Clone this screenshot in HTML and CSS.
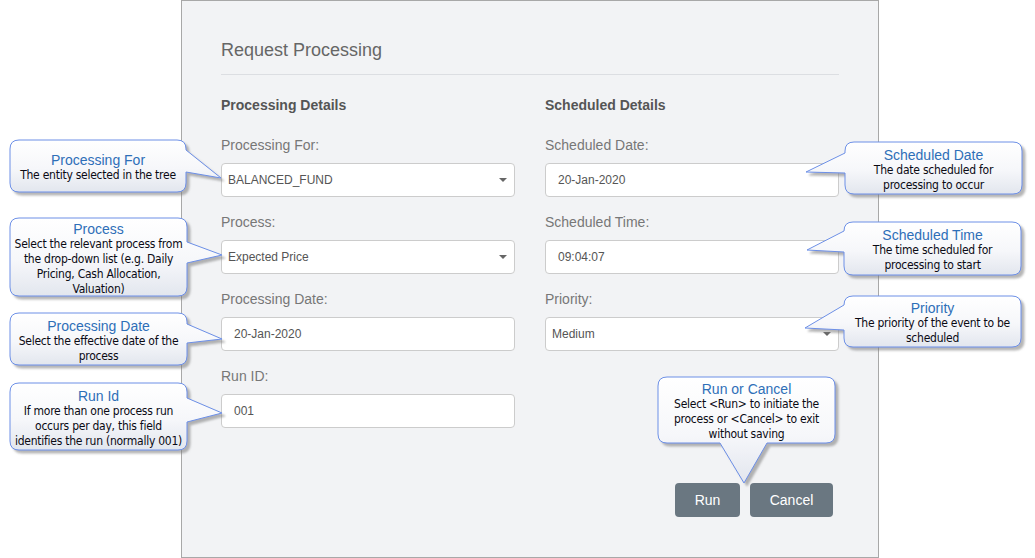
FILE: index.html
```html
<!DOCTYPE html>
<html>
<head>
<meta charset="utf-8">
<link rel="stylesheet" href="styles.css">
</head>
<body>
<div class="stage">
  <svg class="defs" width="0" height="0" aria-hidden="true">
    <defs>
      <linearGradient id="cg" x1="0" y1="0" x2="0" y2="1">
        <stop offset="0" stop-color="#ffffff"/>
        <stop offset="0.55" stop-color="#f6f7fa"/>
        <stop offset="1" stop-color="#e2e6ee"/>
      </linearGradient>
      <filter id="cs" x="-20%" y="-20%" width="150%" height="160%">
        <feDropShadow dx="3" dy="3" stdDeviation="1.2" flood-color="#7a7a7a" flood-opacity="0.55"/>
      </filter>
    </defs>
  </svg>

  <section class="panel">
    <h1 class="title">Request Processing</h1>
    <div class="cols">
      <div class="col">
        <h2 class="sect">Processing Details</h2>
        <div class="field">
          <label class="lbl">Processing For:</label>
          <div class="input select"><span>BALANCED_FUND</span><span class="caret"></span></div>
        </div>
        <div class="field">
          <label class="lbl">Process:</label>
          <div class="input select"><span>Expected Price</span><span class="caret"></span></div>
        </div>
        <div class="field">
          <label class="lbl">Processing Date:</label>
          <div class="input">20-Jan-2020</div>
        </div>
        <div class="field">
          <label class="lbl">Run ID:</label>
          <div class="input">001</div>
        </div>
      </div>
      <div class="col">
        <h2 class="sect">Scheduled Details</h2>
        <div class="field">
          <label class="lbl">Scheduled Date:</label>
          <div class="input">20-Jan-2020</div>
        </div>
        <div class="field">
          <label class="lbl">Scheduled Time:</label>
          <div class="input">09:04:07</div>
        </div>
        <div class="field">
          <label class="lbl">Priority:</label>
          <div class="input select"><span>Medium</span><span class="caret"></span></div>
        </div>
      </div>
    </div>
    <div class="actions">
      <button class="btn btn-run">Run</button>
      <button class="btn btn-cancel">Cancel</button>
    </div>
  </section>

  <div class="callout c-for">
    <svg width="176" height="52"><path d="M9,0 H167 Q176,0 176,9 V10 L211,38 L176,32 V43 Q176,52 167,52 H9 Q0,52 0,43 V9 Q0,0 9,0 Z"/></svg>
    <div class="txt"><div class="ct">Processing For</div><div class="cb">The entity selected in the tree</div></div>
  </div>

  <div class="callout c-process">
    <svg width="177" height="78"><path d="M9,0 H168 Q177,0 177,9 V24 L212,37 L177,45 V69 Q177,78 168,78 H9 Q0,78 0,69 V9 Q0,0 9,0 Z"/></svg>
    <div class="txt"><div class="ct">Process</div><div class="cb">Select the relevant process from<br>the drop-down list (e.g. Daily<br>Pricing, Cash Allocation,<br>Valuation)</div></div>
  </div>

  <div class="callout c-pdate">
    <svg width="177" height="52"><path d="M9,0 H168 Q177,0 177,9 V11 L212,26 L177,30 V43 Q177,52 168,52 H9 Q0,52 0,43 V9 Q0,0 9,0 Z"/></svg>
    <div class="txt"><div class="ct">Processing Date</div><div class="cb">Select the effective date of the<br>process</div></div>
  </div>

  <div class="callout c-runid">
    <svg width="177" height="67"><path d="M9,0 H168 Q177,0 177,9 V15 L212,30 L177,39 V58 Q177,67 168,67 H9 Q0,67 0,58 V9 Q0,0 9,0 Z"/></svg>
    <div class="txt"><div class="ct">Run Id</div><div class="cb">If more than one process run<br>occurs per day, this field<br>identifies the run (normally 001)</div></div>
  </div>

  <div class="callout c-sdate">
    <svg width="177" height="52"><path d="M9,0 H168 Q177,0 177,9 V43 Q177,52 168,52 H9 Q0,52 0,43 V31 L-39,30 L0,11 V9 Q0,0 9,0 Z"/></svg>
    <div class="txt"><div class="ct">Scheduled Date</div><div class="cb">The date scheduled for<br>processing to occur</div></div>
  </div>

  <div class="callout c-stime">
    <svg width="177" height="53"><path d="M9,0 H168 Q177,0 177,9 V44 Q177,53 168,53 H9 Q0,53 0,44 V30 L-37,28 L0,9 Q0,0 9,0 Z"/></svg>
    <div class="txt"><div class="ct">Scheduled Time</div><div class="cb">The time scheduled for<br>processing to start</div></div>
  </div>

  <div class="callout c-priority">
    <svg width="177" height="51"><path d="M9,0 H168 Q177,0 177,9 V42 Q177,51 168,51 H9 Q0,51 0,42 V34 L-39,32 L0,9 Q0,0 9,0 Z"/></svg>
    <div class="txt"><div class="ct">Priority</div><div class="cb">The priority of the event to be<br>scheduled</div></div>
  </div>

  <div class="callout c-run">
    <svg width="177" height="66"><path d="M9,0 H168 Q177,0 177,9 V57 Q177,66 168,66 H109 L86,106 L62,66 H9 Q0,66 0,57 V9 Q0,0 9,0 Z"/></svg>
    <div class="txt"><div class="ct">Run or Cancel</div><div class="cb">Select &lt;Run&gt; to initiate the<br>process or &lt;Cancel&gt; to exit<br>without saving</div></div>
  </div>
</div>
</body>
</html>
```

FILE: styles.css
```css
html, body {
  margin: 0;
  padding: 0;
  background: #ffffff;
}

.stage {
  position: relative;
  width: 1035px;
  height: 558px;
  overflow: hidden;
  font-family: "Liberation Sans", Arial, sans-serif;
}

.defs {
  position: absolute;
  width: 0;
  height: 0;
}

.panel {
  margin-left: 181px;
  width: 698px;
  height: 558px;
  box-sizing: border-box;
  border: 1px solid #a8a8a8;
  background: #f2f3f5;
  padding: 37px 39px 0 39px;
}

.title {
  margin: 0;
  font-size: 18px;
  font-weight: normal;
  line-height: 24px;
  color: #666666;
  padding-bottom: 12px;
  border-bottom: 1px solid #dcdee2;
}

.cols {
  display: grid;
  grid-template-columns: 294px 294px;
  column-gap: 30px;
  margin-top: 20px;
}

.sect {
  margin: 0 0 20px 0;
  font-size: 14px;
  font-weight: bold;
  line-height: 20px;
  color: #555555;
}

.field {
  margin-bottom: 15px;
}

.field:last-child {
  margin-bottom: 0;
}

.lbl {
  display: block;
  font-size: 14px;
  line-height: 20px;
  color: #777777;
  margin-bottom: 8px;
}

.input {
  height: 34px;
  box-sizing: border-box;
  border: 1px solid #cccccc;
  border-radius: 4px;
  background: #ffffff;
  display: flex;
  align-items: center;
  padding: 0 12px;
  font-size: 12px;
  color: #555555;
}

.select {
  justify-content: space-between;
  padding: 0 7px 0 6px;
}

.caret {
  width: 0;
  height: 0;
  border-left: 4px solid transparent;
  border-right: 4px solid transparent;
  border-top: 4px solid #666666;
}

.actions {
  display: flex;
  justify-content: flex-end;
  gap: 10px;
  margin-top: 55px;
  padding-right: 6px;
}

.btn {
  height: 34px;
  border: none;
  border-radius: 4px;
  background: #6a7781;
  color: #ffffff;
  font-family: "Liberation Sans", Arial, sans-serif;
  font-size: 14px;
  padding: 0;
}

.btn-run { width: 65px; }
.btn-cancel { width: 83px; }

/* callouts */
.callout {
  position: absolute;
}

.callout svg {
  position: absolute;
  left: 0;
  top: 0;
  overflow: visible;
}

.callout path {
  fill: url(#cg);
  stroke: #6c8fe6;
  stroke-width: 1;
  filter: url(#cs);
}

.txt {
  position: relative;
  height: 100%;
  box-sizing: border-box;
  padding-top: 4px;
  display: flex;
  flex-direction: column;
  justify-content: center;
  align-items: center;
  text-align: center;
}

.ct {
  font-family: "Liberation Sans", Arial, sans-serif;
  font-size: 14px;
  line-height: 15px;
  color: #2e6fb8;
}

.cb {
  font-family: "DejaVu Sans Condensed", "DejaVu Sans", sans-serif;
  font-stretch: condensed;
  font-size: 12px;
  line-height: 15px;
  letter-spacing: -0.25px;
  color: #0a0a14;
  white-space: nowrap;
}

.c-for { left: 10px; top: 140px; width: 176px; height: 52px; }
.c-process { left: 10px; top: 218px; width: 177px; height: 78px; }
.c-pdate { left: 10px; top: 313px; width: 177px; height: 52px; }
.c-runid { left: 10px; top: 383px; width: 177px; height: 67px; }
.c-sdate { left: 845px; top: 142px; width: 177px; height: 52px; }
.c-stime { left: 844px; top: 222px; width: 177px; height: 53px; }
.c-priority { left: 844px; top: 296px; width: 177px; height: 51px; }
.c-run { left: 658px; top: 377px; width: 177px; height: 66px; }
```
